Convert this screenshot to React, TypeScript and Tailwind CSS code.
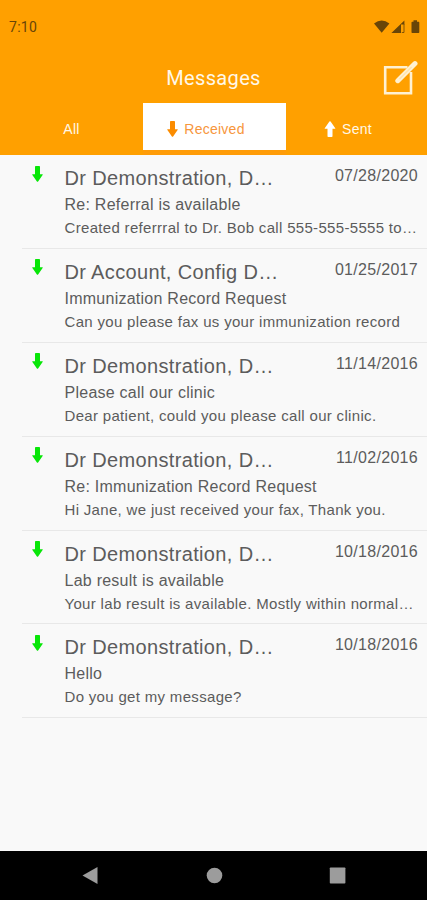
interface Message {
  from: string;
  date: string;
  subject: string;
  body: string;
}

const messages: Message[] = [
  {
    from: "Dr Demonstration, D…",
    date: "07/28/2020",
    subject: "Re: Referral is available",
    body: "Created referrral to Dr. Bob call 555-555-5555 to…",
  },
  {
    from: "Dr Account, Config D…",
    date: "01/25/2017",
    subject: "Immunization Record Request",
    body: "Can you please fax us your immunization record",
  },
  {
    from: "Dr Demonstration, D…",
    date: "11/14/2016",
    subject: "Please call our clinic",
    body: "Dear patient, could you please call our clinic.",
  },
  {
    from: "Dr Demonstration, D…",
    date: "11/02/2016",
    subject: "Re: Immunization Record Request",
    body: "Hi Jane, we just received your fax, Thank you.",
  },
  {
    from: "Dr Demonstration, D…",
    date: "10/18/2016",
    subject: "Lab result is available",
    body: "Your lab result is available. Mostly within normal…",
  },
  {
    from: "Dr Demonstration, D…",
    date: "10/18/2016",
    subject: "Hello",
    body: "Do you get my message?",
  },
];

function Arrow({ className }: { className: string }) {
  return (
    <svg viewBox="0 0 11 16" fill="currentColor" className={className}>
      <path d="M3 0.8Q3 0 3.8 0H7.2Q8 0 8 0.8V8.3H10.3Q11.2 8.3 10.6 9.1L6.1 15.4Q5.5 16.2 4.9 15.4L0.4 9.1Q-0.2 8.3 0.7 8.3H3Z" />
    </svg>
  );
}

function StatusBar() {
  return (
    <div className="flex h-[53px] items-center justify-between pr-[7px] pl-[9px] text-[#684508]">
      <span className="font-[Roboto] text-sm tracking-[0.3px]">7:10</span>
      <svg width="47" height="14" viewBox="0 0 47 14" fill="currentColor" className="overflow-visible">
        <path d="M1 3.6Q8.7 -2.6 16.4 3.6L8.7 12.8Z" />
        <path d="M18.4 13L31.4 0.5V4.4H28V13Z" />
        <path d="M28.8 12.5H31V4" fill="none" stroke="currentColor" strokeWidth="0.8" />
        <path d="M38.5 2.5Q38.5 1.8 39.2 1.8H40.5V0.3H44V1.8H45.6Q46.3 1.8 46.3 2.5V12.3Q46.3 13 45.6 13H39.2Q38.5 13 38.5 12.3Z" />
      </svg>
    </div>
  );
}

function Header() {
  return (
    <header className="h-[155px] bg-[#ffa000] text-[#fff8e8]">
      <StatusBar />
      <div className="grid h-[50px] grid-cols-[1fr_auto_1fr] items-center">
        <h1 className="col-start-2 font-[Roboto] text-xl tracking-[0.35px]">Messages</h1>
        <button className="mr-[9px] justify-self-end" aria-label="Compose">
          <svg width="35" height="36" viewBox="0 0 35 36" fill="none" className="block">
            <path d="M24.5 7.2H2.2V33.2H28V12" stroke="#fff1d2" strokeWidth="2.6" />
            <path d="M14.8 20.7L32 3.6" stroke="#fff1d2" strokeWidth="5" strokeLinecap="round" />
            <path d="M16.5 19L28.6 7" stroke="#ffe3aa" strokeWidth="1.2" />
          </svg>
        </button>
      </div>
      <nav className="grid h-[52px] grid-cols-[143px_143px_141px] text-sm tracking-[0.25px]">
        <button className="flex items-center justify-center">All</button>
        <button className="flex items-center justify-center gap-[6px] border-b-[5px] border-[#ff9c08] bg-white pt-[5px] pr-[17px] text-[#f7963c]">
          <Arrow className="h-4 w-[11px] text-[#fb8c00]" />
          Received
        </button>
        <button className="flex items-center justify-center gap-[6px] pr-[17px]">
          <Arrow className="h-4 w-3 rotate-180 text-white" />
          Sent
        </button>
      </nav>
    </header>
  );
}

function MessageRow({ message }: { message: Message }) {
  return (
    <li className="ml-[22px] flex h-[93.9px] border-b border-[#e8e8e8] pr-[9px]">
      <Arrow className="mt-[10.5px] ml-[10px] h-4 w-[11px] shrink-0 text-[#08e608]" />
      <div className="ml-[21.5px] min-w-0 grow whitespace-nowrap">
        <div className="flex justify-between pt-[9px]">
          <h2 className="text-xl leading-7 tracking-[0.35px]">{message.from}</h2>
          <span className="text-base leading-[23px] tracking-[0.3px]">{message.date}</span>
        </div>
        <p className="text-base leading-[25px] tracking-[0.25px]">{message.subject}</p>
        <p className="text-[15px] leading-[22px] tracking-[0.32px]">{message.body}</p>
      </div>
    </li>
  );
}

function NavigationBar() {
  return (
    <footer className="flex h-[49px] items-center justify-center bg-black">
      <svg width="256" height="18" viewBox="0 0 256 18" fill="#9c9c9c" className="overflow-visible">
        <path d="M-3.5 8.5L11.5 0V17Z" />
        <circle cx="128.5" cy="8.5" r="7.8" />
        <rect x="243.8" y="0.5" width="15.6" height="16" rx="0.8" />
      </svg>
    </footer>
  );
}

function App() {
  return (
    <div className="flex h-[900px] w-[427px] flex-col overflow-hidden bg-[#f9f9f9] font-['Liberation_Sans',sans-serif] text-[#5c5c5c]">
      <Header />
      <ul className="grow">
        {messages.map((message, index) => (
          <MessageRow key={index} message={message} />
        ))}
      </ul>
      <NavigationBar />
    </div>
  );
}

export default App;
